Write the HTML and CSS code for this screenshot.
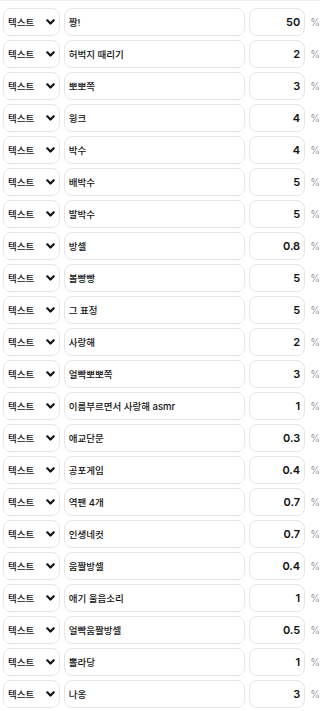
FILE: index.html
```html
<!DOCTYPE html>
<html lang="ko">
<head>
    <meta charset="UTF-8">
    <meta name="viewport" content="width=device-width, initial-scale=1.0">
    <title>Reactions</title>
    <link rel="stylesheet" href="styles.css">
</head>
<body>

<div class="list" id="list"></div>

<script>
    const items = [
        ['짱!', '50'],
        ['허벅지 때리기', '2'],
        ['뽀뽀쪽', '3'],
        ['윙크', '4'],
        ['박수', '4'],
        ['배박수', '5'],
        ['발박수', '5'],
        ['방셀', '0.8'],
        ['볼빵빵', '5'],
        ['그 표정', '5'],
        ['사랑해', '2'],
        ['얼빡뽀뽀쪽', '3'],
        ['이름부르면서 사랑해 asmr', '1'],
        ['애교단문', '0.3'],
        ['공포게임', '0.4'],
        ['역팬 4개', '0.7'],
        ['인생네컷', '0.7'],
        ['움짤방셀', '0.4'],
        ['애기 울음소리', '1'],
        ['얼빡움짤방셀', '0.5'],
        ['뽈라당', '1'],
        ['나옹', '3']
    ];

    const list = document.getElementById('list');
    items.forEach(item => {
        const row = document.createElement('div');
        row.className = 'row';
        row.innerHTML = `
            <div class="type-select">
                <span>텍스트</span>
                <svg class="chevron" width="9" height="6" viewBox="0 0 9 6"><path d="M1.3 1.3 L4.5 4.5 L7.7 1.3" fill="none" stroke="#111" stroke-width="2.2" stroke-linecap="round" stroke-linejoin="round"/></svg>
            </div>
            <input class="name-input" type="text" value="${item[0]}">
            <input class="rate-input" type="text" value="${item[1]}">
            <span class="percent">%</span>
        `;
        list.appendChild(row);
    });
</script>

</body>
</html>
```

FILE: styles.css
```css
body {
    margin: 0;
    background: #fff;
    font-family: "Noto Sans CJK KR", "Noto Sans", sans-serif;
    font-size: 12px;
    color: #111;
    border-top: 1px solid #f0f0f3;
}
.list {
    display: flex;
    flex-direction: column;
    gap: 4px;
    padding: 7px 0 0 3px;
}
.row {
    display: flex;
    align-items: center;
    height: 28px;
}
.type-select {
    box-sizing: border-box;
    width: 57px;
    height: 28px;
    border: 1px solid #e6e6ea;
    border-radius: 8px;
    display: flex;
    align-items: center;
    justify-content: space-between;
    padding: 0 4px 0 4px;
    font-size: 9.5px;
    font-weight: 500;
    margin-right: 4px;
}
.chevron {
    display: block;
}
input {
    box-sizing: border-box;
    height: 28px;
    border: 1px solid #e6e6ea;
    border-radius: 8px;
    font-family: Inter, "Noto Sans CJK KR", sans-serif;
    font-size: 9.5px;
    font-weight: 500;
    color: #111;
    background: #fff;
    outline: none;
    margin: 0;
}
.name-input {
    width: 182px;
    padding: 0 4px;
    margin-right: 4px;
}
.rate-input {
    width: 56px;
    padding: 0 4px;
    text-align: right;
    font-size: 11px;
    font-weight: 600;
}
.percent {
    margin-left: 5px;
    font-family: Inter, "Noto Sans", sans-serif;
    font-size: 10px;
    color: #9a9aa6;
}
```
